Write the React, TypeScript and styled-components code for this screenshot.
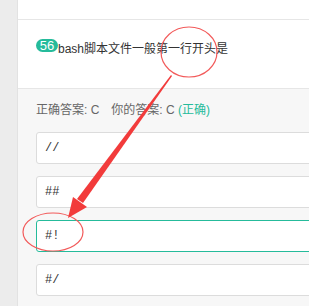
import React from 'react';
import styled, { createGlobalStyle } from 'styled-components';

const GlobalStyle = createGlobalStyle`
  html, body {
    margin: 0;
    padding: 0;
    background: #f7f7f7;
    font-family: "Liberation Sans", "Noto Sans CJK SC", sans-serif;
  }
`;

interface OptionStyle {
  selected?: boolean;
}

const Page = styled.div`
  position: relative;
  display: flex;
  width: 309px;
  height: 306px;
  overflow: hidden;
`;

const SideStrip = styled.div`
  width: 17px;
  flex-shrink: 0;
  background: #ececec;
  border-right: 1px solid #e2e2e2;
`;

const Main = styled.div`
  flex: 1;
  display: flex;
  flex-direction: column;
  min-width: 0;
`;

const TopBar = styled.div`
  height: 19px;
  background: #fff;
  border-bottom: 1px solid #e6e6e6;
`;

const QuestionBlock = styled.div`
  height: 69px;
  box-sizing: border-box;
  padding: 17px 0 0 18px;
  background: #fff;
  border-bottom: 1px solid #e6e6e6;
`;

const QuestionLine = styled.div`
  display: flex;
  align-items: center;
  height: 20px;
  font-size: 12px;
  color: #333;
  white-space: nowrap;
`;

const Badge = styled.span`
  display: inline-flex;
  align-items: center;
  justify-content: center;
  width: 22px;
  height: 13px;
  margin-top: -4px;
  border-radius: 7px;
  background: #25bb9b;
  color: #fff;
  font-size: 13px;
  line-height: 13px;
`;

const AnswerBlock = styled.div`
  flex: 1;
  padding: 12px 0 0 18px;
  background: #f7f7f7;
`;

const ResultLine = styled.div`
  height: 18px;
  line-height: 18px;
  font-size: 12px;
  color: #666;
  white-space: nowrap;
  margin-bottom: 13px;
`;

const Gap = styled.span`
  display: inline-block;
  width: 12px;
`;

const Correct = styled.span`
  color: #25bb9b;
`;

const OptionList = styled.div`
  display: flex;
  flex-direction: column;
  gap: 12px;
`;

const Option = styled.div<OptionStyle>`
  height: 32px;
  box-sizing: border-box;
  width: 300px;
  display: flex;
  align-items: center;
  padding-left: 8px;
  background: #fff;
  border: 1px solid ${(props) => (props.selected ? '#25bb9b' : '#dcdcdc')};
  border-radius: 3px;
  font-family: "Liberation Mono", monospace;
  font-size: 12px;
  color: #333;
`;

const Marks = styled.svg`
  position: absolute;
  left: 0;
  top: 0;
  pointer-events: none;
`;

const options = ['//', '##', '#!', '#/'];

export default function App() {
  return (
    <>
      <GlobalStyle />
      <Page>
        <SideStrip />
        <Main>
          <TopBar />
          <QuestionBlock>
            <QuestionLine>
              <Badge>56</Badge>
              bash脚本文件一般第一行开头是
            </QuestionLine>
          </QuestionBlock>
          <AnswerBlock>
            <ResultLine>
              正确答案: C<Gap />你的答案: C <Correct>(正确)</Correct>
            </ResultLine>
            <OptionList>
              {options.map((opt) => (
                <Option key={opt} selected={opt === '#!'}>
                  {opt}
                </Option>
              ))}
            </OptionList>
          </AnswerBlock>
        </Main>
        {/* red hand-drawn marks */}
        <Marks width="309" height="306" viewBox="0 0 309 306">
          <ellipse cx="189" cy="52" rx="28" ry="25" fill="none" stroke="#f25a5a" strokeWidth="1.2" />
          <ellipse cx="53" cy="232" rx="30" ry="19" fill="none" stroke="#f25a5a" strokeWidth="1.2" />
          <polygon points="171,75 172,76 83,203 77,199" fill="#f23b3b" />
          <polygon points="68,218 73,197 87,207" fill="#f23b3b" />
        </Marks>
      </Page>
    </>
  );
}
